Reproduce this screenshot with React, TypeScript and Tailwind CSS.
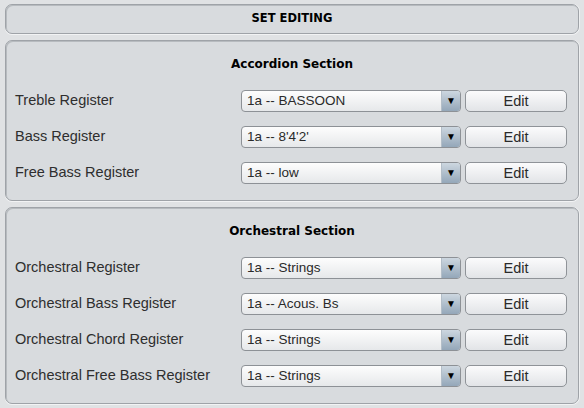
import React from 'react'

type Row = { label: string; value: string }

const ACCORDION: Row[] = [
  { label: 'Treble Register', value: '1a -- BASSOON' },
  { label: 'Bass Register', value: "1a -- 8'4'2'" },
  { label: 'Free Bass Register', value: '1a -- low' },
]

const ORCHESTRAL: Row[] = [
  { label: 'Orchestral Register', value: '1a -- Strings' },
  { label: 'Orchestral Bass Register', value: '1a -- Acous. Bs' },
  { label: 'Orchestral Chord Register', value: '1a -- Strings' },
  { label: 'Orchestral Free Bass Register', value: '1a -- Strings' },
]

function Panel({ children, className = '' }: { children: React.ReactNode; className?: string }) {
  return (
    <div
      className={`rounded-[7px] border border-[#9fa3a8] bg-[#d8dbde] shadow-[inset_1px_1px_0_#b7bbbf,0_1px_0_#f2f3f4,1px_0_0_#eef0f1] ${className}`}
    >
      {children}
    </div>
  )
}

function Select({ value }: { value: string }) {
  return (
    <div className="flex h-[22px] w-[220px] overflow-hidden rounded-[4px] border border-[#8d9196] bg-gradient-to-b from-[#fdfdfd] to-[#e6e8ea]">
      <div className="flex-1 pl-[5px] text-[13.5px] leading-[20px] text-[#2a2a2a]">{value}</div>
      <div className="flex w-[19px] items-center justify-center border-l border-[#b3bec8] bg-gradient-to-b from-[#cdd7e0] to-[#94a7b9]">
        <span className="text-[10px] leading-none text-black">▼</span>
      </div>
    </div>
  )
}

function EditButton() {
  return (
    <button className="h-[22px] w-[102px] rounded-[5px] border border-[#8f9398] bg-gradient-to-b from-[#fbfbfc] to-[#e2e4e7] text-[14.5px] leading-[20px] text-[#2a2a2a]">
      Edit
    </button>
  )
}

function Section({ title, rows }: { title: string; rows: Row[] }) {
  return (
    <Panel className="pt-[15px] pb-[9px]">
      <div className="text-center font-['DejaVu_Sans',sans-serif] text-[12px] font-bold leading-[16px] text-black">
        {title}
      </div>
      <div className="mt-[11px]">
        {rows.map((r) => (
          <div key={r.label} className="flex h-[36px] items-center pl-[9px]">
            <span className="mb-[3px] w-[226px] shrink-0 text-[14.5px] leading-[18px] text-[#2e2e2e]">
              {r.label}
            </span>
            <Select value={r.value} />
            <div className="ml-[4px]">
              <EditButton />
            </div>
          </div>
        ))}
      </div>
    </Panel>
  )
}

export default function App() {
  return (
    <div className="flex h-[408px] w-[584px] flex-col gap-[6px] bg-[#e0e2e4] pt-[4px] pl-[5px] pr-[5px] font-['Liberation_Sans',Arial,sans-serif]">
      <Panel className="flex h-[30px] items-center justify-center">
        <span className="font-['DejaVu_Sans',sans-serif] text-[11.5px] font-bold text-black">SET EDITING</span>
      </Panel>
      <Section title="Accordion Section" rows={ACCORDION} />
      <Section title="Orchestral Section" rows={ORCHESTRAL} />
    </div>
  )
}
